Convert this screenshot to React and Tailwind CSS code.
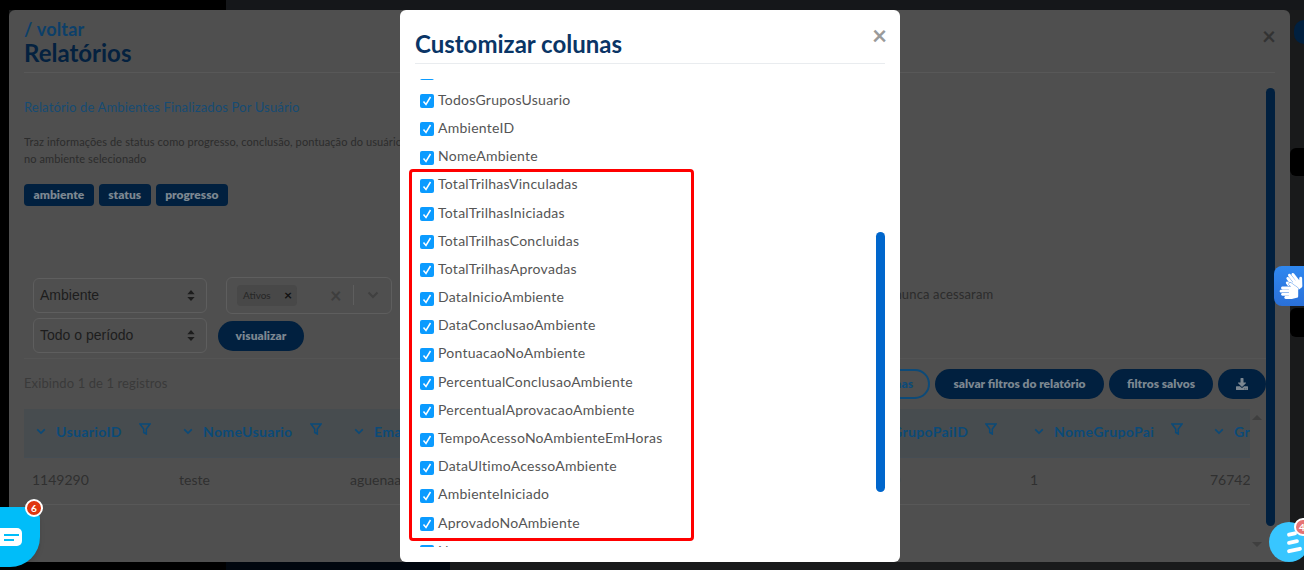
import React from "react";
import { FaSignLanguage, FaDownload } from "react-icons/fa";

const colunas = [
  "Anterior",
  "TodosGruposUsuario",
  "AmbienteID",
  "NomeAmbiente",
  "TotalTrilhasVinculadas",
  "TotalTrilhasIniciadas",
  "TotalTrilhasConcluidas",
  "TotalTrilhasAprovadas",
  "DataInicioAmbiente",
  "DataConclusaoAmbiente",
  "PontuacaoNoAmbiente",
  "PercentualConclusaoAmbiente",
  "PercentualAprovacaoAmbiente",
  "TempoAcessoNoAmbienteEmHoras",
  "DataUltimoAcessoAmbiente",
  "AmbienteIniciado",
  "AprovadoNoAmbiente",
  "Nota",
];

const tabela = [
  { titulo: "UsuarioID", valor: "1149290", largura: "w-[147px]" },
  { titulo: "NomeUsuario", valor: "teste", largura: "w-[171px]" },
  { titulo: "Email", valor: "aguenaa@teste.com", largura: "w-[518px]" },
  { titulo: "GrupoPaiID", valor: "1140", largura: "w-[162px]" },
  { titulo: "NomeGrupoPai", valor: "1", largura: "w-[180px]" },
  { titulo: "GrupoUsuario", valor: "76742", largura: "w-[180px]" },
];

const Chevron = ({ className }) => (
  <svg viewBox="0 0 12 8" className={className} fill="none" stroke="currentColor" strokeWidth="2">
    <path d="M1.500 1.500 6 6l4.500-4.500" />
  </svg>
);

const Funil = () => (
  <svg viewBox="0 0 12 12" className="mb-[4px] h-[12px] w-[12px] shrink-0 text-[#0b4a78]" fill="none" stroke="currentColor" strokeWidth="1.500">
    <path d="M1 1h10L7.300 6v5L4.700 9.500V6z" />
  </svg>
);

const SelectFake = ({ texto }) => (
  <div className="flex h-[35px] w-[174px] shrink-0 items-center justify-between rounded-md border border-[#5e5e5e] pl-[6px] pr-[11px] font-['Liberation_Sans',sans-serif] text-[14px] text-[#1d1d1d]">
    <span>{texto}</span>
    <svg viewBox="0 0 8 12" className="h-[11px] w-[8px] text-[#1d1d1d]" fill="currentColor">
      <path d="M4 0 8 4.500H0zM4 12 0 7.500h8z" />
    </svg>
  </div>
);

const Pilula = ({ children, className }) => (
  <button className={`flex h-[30px] items-center justify-center rounded-full bg-[#01203f] text-[12px] font-extrabold text-[#7c8791] ${className}`}>
    {children}
  </button>
);

export default function App() {
  return (
    <div className="relative h-[570px] w-[1304px] overflow-hidden bg-[#191a1b] font-['Lato',sans-serif]">
      {/* faixas do fundo */}
      <div className="absolute left-0 top-0 h-[10px] w-[226px] bg-black" />
      <div className="absolute left-[226px] top-0 h-[10px] w-[1078px] bg-[#15171a]" />
      <div className="absolute left-0 top-0 h-[570px] w-[9px] bg-black" />
      <div className="absolute bottom-0 left-0 h-[8px] w-[226px] bg-black" />
      <div className="absolute bottom-0 left-[226px] h-[8px] w-[224px] bg-[#01070f]" />
      <div className="absolute right-0 top-[20px] h-[24px] w-[10px] rounded-l-full bg-[#01203f]" />
      <div className="absolute right-0 top-[148px] h-[28px] w-[14px] rounded-l-md bg-black" />
      <div className="absolute right-0 top-[308px] h-[29px] w-[14px] rounded-l-md bg-black" />

      {/* painel de relatórios */}
      <div className="relative ml-[9px] mt-[10px] h-[552px] w-[1281px] rounded-md bg-[#4f4f4f] pl-[15px] pt-[9px]">
        <div className="absolute right-[14px] top-[16px] text-[24px] font-bold leading-[20px] text-[#333333]">×</div>
        <div className="text-[18px] font-bold leading-[20px] tracking-[0.2px] text-[#0c3f69]">/ voltar</div>
        <h1 className="text-[24px] font-bold leading-[28px] text-[#04213f]">Relatórios</h1>
        <div className="mr-[15px] mt-[5px] border-t border-[#585858]" />
        <p className="mt-[26px] text-[13px] leading-[16px] tracking-[0.15px] text-[#164b73]">Relatório de Ambientes Finalizados Por Usuário</p>
        <p className="mt-[18px] w-[376px] overflow-hidden whitespace-nowrap text-[11px] leading-[17px] tracking-[0.1px] text-[#2c2c2c]">
          Traz informações de status como progresso, conclusão, pontuação do usuário
          <br />
          no ambiente selecionado
        </p>
        <div className="mt-[17px] flex gap-[5px]">
          {["ambiente", "status", "progresso"].map((tag) => (
            <span key={tag} className="flex h-[22px] items-center rounded bg-[#01203f] px-[9.500px] text-[12px] font-extrabold text-[#7c8791]">
              {tag}
            </span>
          ))}
        </div>

        {/* filtros */}
        <div className="mt-[71px] flex flex-col gap-[5px] pl-[9px]">
          <div className="flex h-[36px] items-center">
            <SelectFake texto="Ambiente" />
            <div className="ml-[19px] flex h-[37px] w-[166px] items-center rounded-md border border-[#5e5e5e] pl-[10px]">
              <span className="flex h-[21px] w-[60px] items-center justify-between rounded-sm bg-[#484848] pl-[6px] pr-[5px] text-[10px] text-[#262626]">
                Ativos <b className="text-[14px] leading-none text-[#111111]">×</b>
              </span>
              <span className="ml-[33px] text-[20px] font-bold leading-none text-[#3e3e3e]">×</span>
              <span className="ml-[11px] h-[20px] border-l border-[#5e5e5e]" />
              <Chevron className="ml-[13px] h-[8px] w-[12px] text-[#404040]" />
            </div>
            <span className="ml-[423px] text-[13px] tracking-[0.15px] text-[#2c2c2c]">Usuários que nunca acessaram</span>
          </div>
          <div className="flex h-[35px] items-center">
            <SelectFake texto="Todo o período" />
            <Pilula className="ml-[11px] w-[86px]">visualizar</Pilula>
          </div>
        </div>
        <div className="mr-[24px] mt-[5px] border-t border-[#545454]" />

        <div className="mr-[24px] mt-[10px] flex h-[30px] items-center gap-[5px]">
          <span className="text-[13px] tracking-[0.1px] text-[#3a3a3a]">Exibindo 1 de 1 registros</span>
          <button className="ml-auto h-[30px] w-[80px] rounded-full border-2 border-[#0d4a78] pr-[15px] text-right text-[12px] font-extrabold text-[#0d4a78]">
            colunas
          </button>
          <Pilula className="w-[169px]">salvar filtros do relatório</Pilula>
          <Pilula className="w-[104px]">filtros salvos</Pilula>
          <Pilula className="w-[48px]">
            <FaDownload className="h-[12px] w-[12px]" />
          </Pilula>
        </div>

        {/* tabela */}
        <div className="mt-[10px] w-[1226px] overflow-hidden">
          <div className="flex h-[49px] w-max border-b border-[#454d54] bg-[#474c4f]">
            {tabela.map((col) => (
              <div key={col.titulo} className={`flex shrink-0 items-center pb-[4px] pl-[12px] ${col.largura}`}>
                <Chevron className="h-[7px] w-[10px] shrink-0 text-[#0b4a78]" />
                <span className="ml-[10px] text-[14px] font-bold tracking-[0.35px] text-[#0b4a78]">{col.titulo}</span>
                <span className="ml-[17px]">
                  <Funil />
                </span>
              </div>
            ))}
          </div>
          <div className="flex h-[47px] w-max items-center border-b border-[#585858] pb-[3px]">
            {tabela.map((col) => (
              <div key={col.titulo} className={`shrink-0 pl-[8px] text-[14px] text-[#303030] ${col.largura}`}>
                {col.valor}
              </div>
            ))}
          </div>
        </div>

        {/* barras de rolagem do painel */}
        <div className="absolute left-[1257px] top-[78px] h-[438px] w-[9px] rounded-full bg-[#01203f]" />
        <div className="absolute left-[1243px] top-[405px] h-0 w-0 border-x-[5px] border-b-[5px] border-x-transparent border-b-[#3f3f3f]" />
        <div className="absolute left-[1243px] top-[532px] h-0 w-0 border-x-[5px] border-t-[5px] border-x-transparent border-t-[#3f3f3f]" />
      </div>

      {/* modal */}
      <div className="absolute left-[400px] top-[10px] h-[552px] w-[500px] rounded-md bg-white">
        <div className="mx-[15px] flex h-[54px] items-end justify-between border-b border-[#e9ecef] pb-[3px]">
          <h2 className="text-[24px] font-bold leading-[32px] text-[#0a3566]">Customizar colunas</h2>
          <span className="mb-[12px] -mr-[2px] text-[26px] font-bold leading-none text-[#9a9a9a]">×</span>
        </div>
        <div className="relative mt-[15px] h-[468px] overflow-hidden">
          <div className="-mt-[22px] pl-[20px]">
            {colunas.map((nome) => (
              <div key={nome} className="flex h-[28.2px] items-center">
                <span className="flex h-[14px] w-[14px] shrink-0 translate-y-[2px] items-center justify-center rounded-[2px] bg-[#0b9bff]">
                  <svg viewBox="0 0 14 14" className="h-[14px] w-[14px]" fill="none" stroke="white" strokeWidth="1.500">
                    <path d="M3.500 7.500 6 10.500 10.500 3" />
                  </svg>
                </span>
                <span className="ml-[4px] text-[14px] tracking-[0.25px] text-[#555555]">{nome}</span>
              </div>
            ))}
          </div>
        </div>
        <div className="absolute left-[476px] top-[222px] h-[260px] w-[9px] rounded-full bg-[#0066cc]" />
      </div>

      {/* marcação vermelha */}
      <div className="absolute left-[409px] top-[169px] h-[372px] w-[285px] rounded-sm border-[3px] border-[#ff0000]" />

      {/* libras */}
      <div className="absolute left-[1274px] top-[266px] flex h-[40px] w-[30px] items-center rounded-l-lg bg-linear-to-b from-[#2f88f0] to-[#2a70d8] pl-[4px]">
        <FaSignLanguage className="h-[26px] w-[26px] shrink-0 text-white" />
      </div>

      {/* chat esquerdo */}
      <div className="absolute -left-[30px] top-[507px] flex h-[60px] w-[70px] items-center justify-end rounded-bl-[30px] rounded-br-[30px] rounded-tl-[12px] rounded-tr-[12px] bg-[#00bdf9] pr-[18px] shadow-md">
        <div className="flex h-[18px] w-[30px] flex-col items-center justify-center gap-[3px] rounded-[5px] bg-white pl-[8px]">
          <span className="h-[2px] w-[15px] bg-[#00bdf9]" />
          <span className="ml-[4px] h-[2px] w-[10px] self-start bg-[#00bdf9]" />
        </div>
      </div>
      <div className="absolute left-[25px] top-[499px] flex h-[18px] w-[18px] items-center justify-center rounded-full border-2 border-white bg-[#e0360f] text-[10px] font-bold text-white">
        6
      </div>

      {/* chat direito */}
      <div className="absolute left-[1269px] top-[522px] flex h-[40px] w-[40px] flex-col justify-center gap-[4px] rounded-full bg-[#38c6ff] pl-[18px]">
        <span className="h-[4px] w-[10px] -rotate-12 rounded-full bg-white" />
        <span className="h-[4px] w-[12px] -rotate-12 rounded-full bg-white" />
        <span className="h-[4px] w-[15px] -rotate-12 rounded-full bg-white" />
      </div>
      <div className="absolute left-[1294px] top-[518px] flex h-[18px] w-[18px] items-center justify-center rounded-full border-2 border-white bg-[#e57373] text-[10px] font-bold text-white">
        <span className="-ml-[2px]">4</span>
      </div>
    </div>
  );
}
